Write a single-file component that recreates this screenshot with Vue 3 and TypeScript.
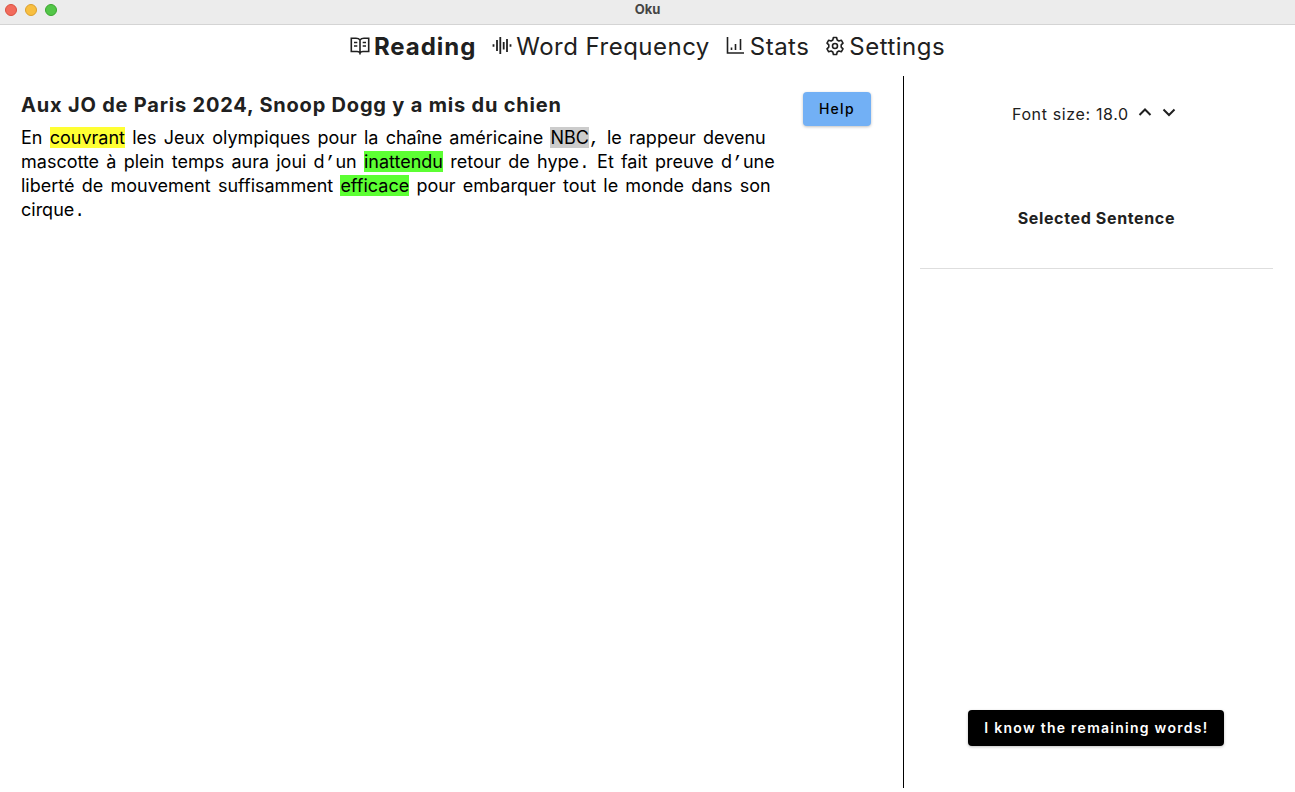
<script setup lang="ts">
import { ref } from 'vue'

type Token = { text: string; kind: 'word' | 'mark' | 'space'; state?: 'new' | 'learning' | 'ignored' }

const tabs = [
  { name: 'Reading', icon: 'read' },
  { name: 'Word Frequency', icon: 'wave' },
  { name: 'Stats', icon: 'chart' },
  { name: 'Settings', icon: 'gear' },
]
const active = ref('Reading')
const fontSize = ref(18)

const article =
  'En couvrant les Jeux olympiques pour la chaîne américaine NBC, le rappeur devenu mascotte à plein temps aura joui d’un inattendu retour de hype. Et fait preuve d’une liberté de mouvement suffisamment efficace pour embarquer tout le monde dans son cirque.'

const states: Record<string, Token['state']> = {
  couvrant: 'new',
  NBC: 'ignored',
  inattendu: 'learning',
  efficace: 'learning',
}

const tokens: Token[] = (article.match(/[\p{L}]+|\s|[^\p{L}\s]/gu) ?? []).map((text) => ({
  text,
  kind: /\s/.test(text) ? 'space' : /\p{L}/u.test(text) ? 'word' : 'mark',
  state: states[text],
}))
</script>

<template>
  <div class="window">
    <header class="titlebar">
      <div class="lights">
        <button class="light close" aria-label="Close"></button>
        <button class="light minimize" aria-label="Minimize"></button>
        <button class="light zoom" aria-label="Zoom"></button>
      </div>
      <span class="title">Oku</span>
    </header>

    <nav class="tabs">
      <a v-for="tab in tabs" :key="tab.name" href="#" class="tab" :class="{ active: active === tab.name }" @click.prevent="active = tab.name">
        <svg v-if="tab.icon === 'read'" class="icon" viewBox="0 0 20 20" aria-hidden="true">
          <path d="M10 4C9 2.700 7.500 2.300 6 2.300H1.300v13.200H7c1.500 0 2.500.5 3 1.500.5-1 1.500-1.500 3-1.500h5.700V2.300H14c-1.500 0-3 .4-4 1.700zM10 4v14.500M4 6.500h3.300M4 10h3.300M12.700 6.500H16M12.700 10H16" />
        </svg>
        <svg v-else-if="tab.icon === 'wave'" class="icon wave" viewBox="0 0 20 20" aria-hidden="true">
          <path d="M1.500 8.200v2.600M5 4v11M8.300 1v17M11.700 6v7.500M15 3v13M18.500 8.200v2.600" />
        </svg>
        <svg v-else-if="tab.icon === 'chart'" class="icon" viewBox="0 0 20 20" aria-hidden="true">
          <path d="M1.500 1v16h16.500M5.500 11.500v2.500M9.500 8v6M14.500 3v11" />
        </svg>
        <svg v-else class="icon" viewBox="0 0 20 20" aria-hidden="true">
          <path d="M8.400 1.500h3.200l.6 2.500 1.700 1 2.400-.8 1.700 2.900-1.800 1.800v2.200l1.800 1.800-1.700 2.900-2.400-.8-1.700 1-.6 2.500H8.400L7.800 16l-1.700-1-2.400.8L2 12.900l1.800-1.800V8.900L2 7.100l1.700-2.900 2.400.8 1.700-1z" stroke-linejoin="round" />
          <circle cx="10" cy="10" r="2.500" />
        </svg>
        <span>{{ tab.name }}</span>
      </a>
    </nav>

    <main class="content">
      <section class="reader">
        <article>
          <h1>Aux JO de Paris 2024, Snoop Dogg y a mis du chien</h1>
          <p class="text"><span v-for="(t, i) in tokens" :key="i" :class="[t.kind, t.state]">{{ t.text }}</span></p>
        </article>
        <button class="button help">Help</button>
      </section>

      <aside class="side">
        <div class="sizer">
          <span>Font size: {{ fontSize.toFixed(1) }}</span>
          <button class="step" aria-label="Increase font size" @click="fontSize++">
            <svg viewBox="0 0 24 24" aria-hidden="true"><path d="M6.500 13L12 7.500 17.500 13" /></svg>
          </button>
          <button class="step" aria-label="Decrease font size" @click="fontSize--">
            <svg viewBox="0 0 24 24" aria-hidden="true"><path d="M6.500 7.500L12 13l5.500-5.500" /></svg>
          </button>
        </div>
        <h2>Selected Sentence</h2>
        <hr />
        <button class="button know">I know the remaining words!</button>
      </aside>
    </main>
  </div>
</template>

<style>
body {
  margin: 0;
  background: #fff;
}
</style>

<style scoped>
.window {
  display: flex;
  flex-direction: column;
  box-sizing: border-box;
  min-height: 100vh;
  padding-bottom: 4px;
  font-family: Inter, "Liberation Sans", sans-serif;
  font-size: 16px;
  line-height: 24px;
  color: #202020;
}
button {
  font: inherit;
  color: inherit;
  border: 0;
  padding: 0;
  cursor: pointer;
}
.titlebar {
  display: grid;
  grid-template-columns: 1fr auto 1fr;
  align-items: center;
  height: 24px;
  padding: 0 5px;
  background: #ececec;
  border-bottom: 1px solid #d4d4d4;
}
.lights {
  display: flex;
  gap: 8px;
  padding-bottom: 4px;
}
.light {
  box-sizing: border-box;
  width: 12px;
  height: 12px;
  border: 1px solid;
  border-radius: 50%;
}
.close { background: #f26b5c; border-color: #d9503f; }
.minimize { background: #f8bf40; border-color: #dba02c; }
.zoom { background: #53c648; border-color: #3aa62f; }
.title {
  padding-bottom: 6px;
  font-size: 13px;
  line-height: 18px;
  font-weight: 700;
  color: #454545;
}
.tabs {
  display: flex;
  justify-content: center;
  gap: 16px;
  padding: 4px 0 11px;
}
.tab {
  display: flex;
  align-items: center;
  gap: 4px;
  font-size: 24px;
  line-height: 36px;
  letter-spacing: 0.02em;
  color: inherit;
  text-decoration: none;
}
.tab.active {
  font-weight: 700;
  letter-spacing: 0.04em;
}
.icon {
  width: 20px;
  height: 20px;
  margin-bottom: 2px;
  fill: none;
  stroke: currentColor;
  stroke-width: 1.6;
}
.wave { stroke-width: 1.8; }
.content {
  flex: 1;
  display: grid;
  grid-template-columns: 7fr 3fr;
  padding: 0 6px 0 5px;
}
.reader {
  display: flex;
  align-items: flex-start;
  gap: 16px;
  padding: 16px 32px 16px 16px;
  border-right: 1px solid #000;
}
article { flex: 1; }
h1 {
  margin: 0 0 8px;
  font-size: 20px;
  line-height: 26px;
  letter-spacing: 0.04em;
}
.text {
  margin: 0;
  font-size: 18px;
  color: #000;
}
.space, .mark {
  font-family: "Liberation Mono", monospace;
  line-height: 1;
}
.space { font-size: 12px; }
.mark { font-size: 18px; }
.new { background: #ffff33; }
.learning { background: #5cff33; }
.ignored { background: #ccc; }
.button {
  padding: 0 16px;
  border-radius: 4px;
  font-size: 14px;
  font-weight: 600;
  letter-spacing: 0.09em;
  box-shadow: 0 1px 3px rgba(0, 0, 0, 0.25);
}
.help {
  height: 34px;
  background: #72b0f5;
  color: #000;
  font-weight: 500;
}
.side {
  display: flex;
  flex-direction: column;
  align-items: center;
  padding: 26px 16px 42px;
}
.sizer {
  display: flex;
  align-items: center;
}
.sizer span {
  padding-right: 4px;
  letter-spacing: 0.04em;
}
.step {
  width: 24px;
  height: 24px;
  background: none;
}
.step svg {
  display: block;
  fill: none;
  stroke: currentColor;
  stroke-width: 2;
}
h2 {
  margin: 80px 0 38px;
  font-size: 16px;
  letter-spacing: 0.04em;
}
hr {
  width: 100%;
  margin: 0;
  border: 0;
  border-top: 1px solid #dedede;
}
.know {
  height: 36px;
  margin-top: auto;
  background: #000;
  color: #fff;
}
</style>
